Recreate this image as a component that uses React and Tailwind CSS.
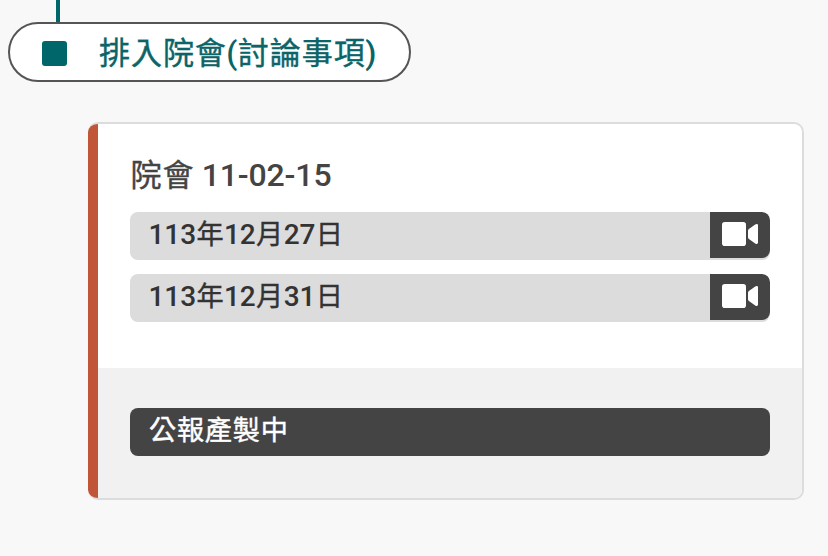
function VideoIcon() {
  return (
    <svg width="36" height="24" viewBox="0 0 36 24" fill="#fff" aria-hidden="true">
      <rect x="0" y="0" width="24" height="24" rx="2.8" />
      <path d="M26 8.8C26 8.1 26.3 7.5 26.9 7.1L33.2 2.6C34.5 1.6 36 1.9 36 3.4V20.6C36 22.1 34.5 22.4 33.2 21.4L26.9 16.9C26.3 16.5 26 15.9 26 15.2Z" />
    </svg>
  );
}

// Chinese glyphs use the regular weight with a thin stroke and sit slightly smaller than the digits beside them.
function Han({ children }) {
  return (
    <span className="relative left-[0.015em] text-[0.97em] leading-none font-normal tracking-[0.03em] [-webkit-text-stroke:0.4px_currentColor]">
      {children}
    </span>
  );
}

function DateRow({ day }) {
  return (
    <div className="flex h-12 w-[640px] items-start justify-between overflow-hidden rounded-lg bg-[#dcdcdc]">
      <span className="pl-[18.5px] text-[28px] leading-[46px] tracking-[-0.08px] text-[#333]">
        113<Han>年</Han>12<Han>月</Han>{day}<Han>日</Han>
      </span>
      <button className="flex h-[46px] w-[60px] justify-center rounded-r-lg bg-[#444] pt-[10px]">
        <VideoIcon />
      </button>
    </div>
  );
}

export default function App() {
  return (
    <main
      lang="zh-Hant"
      className="h-[556px] w-[828px] overflow-hidden bg-[#f8f8f8] font-['Roboto','Noto_Sans_CJK_TC',sans-serif] font-medium"
    >
      <div className="ml-14 h-[22px] w-1 bg-[#00666a]" />
      <div className="ml-2 flex h-[60px] w-[403px] items-center rounded-full border-2 border-[#555] bg-white pl-8">
        <span className="mb-[-3px] size-[25px] rounded-[3px] bg-[#00666a]" />
        <span className="mt-[2px] ml-[31.5px] text-[32px] leading-[56px] tracking-[-0.1px] whitespace-nowrap text-[#0b6468]">
          <Han>排入院會</Han>(<Han>討論事項</Han>)
        </span>
      </div>

      <section className="mt-10 ml-[88px] flex h-[378px] w-[716px] overflow-hidden rounded-[10px] border-y-2 border-r-2 border-[#dcdcdc] bg-white">
        <div className="-my-px w-[10px] shrink-0 rounded-l-lg bg-[#c05538]" />
        <div className="flex-1">
          <div className="h-[244px] pt-[26px] pl-8">
            <h2 className="h-[50px] text-[32px] leading-[50px] font-medium tracking-[-0.15px] text-[#444]">
              <Han>院會</Han> 11-02-15
            </h2>
            <div className="mt-3 flex flex-col gap-[14px]">
              <DateRow day="27" />
              <DateRow day="31" />
            </div>
          </div>
          <div className="h-[130px] bg-[#f1f1f1] pt-10 pl-8">
            <div className="h-12 w-[640px] rounded-lg bg-[#444] pl-[18.5px] text-[28px] leading-[46px] text-white">
              <Han>公報產製中</Han>
            </div>
          </div>
        </div>
      </section>
    </main>
  );
}
